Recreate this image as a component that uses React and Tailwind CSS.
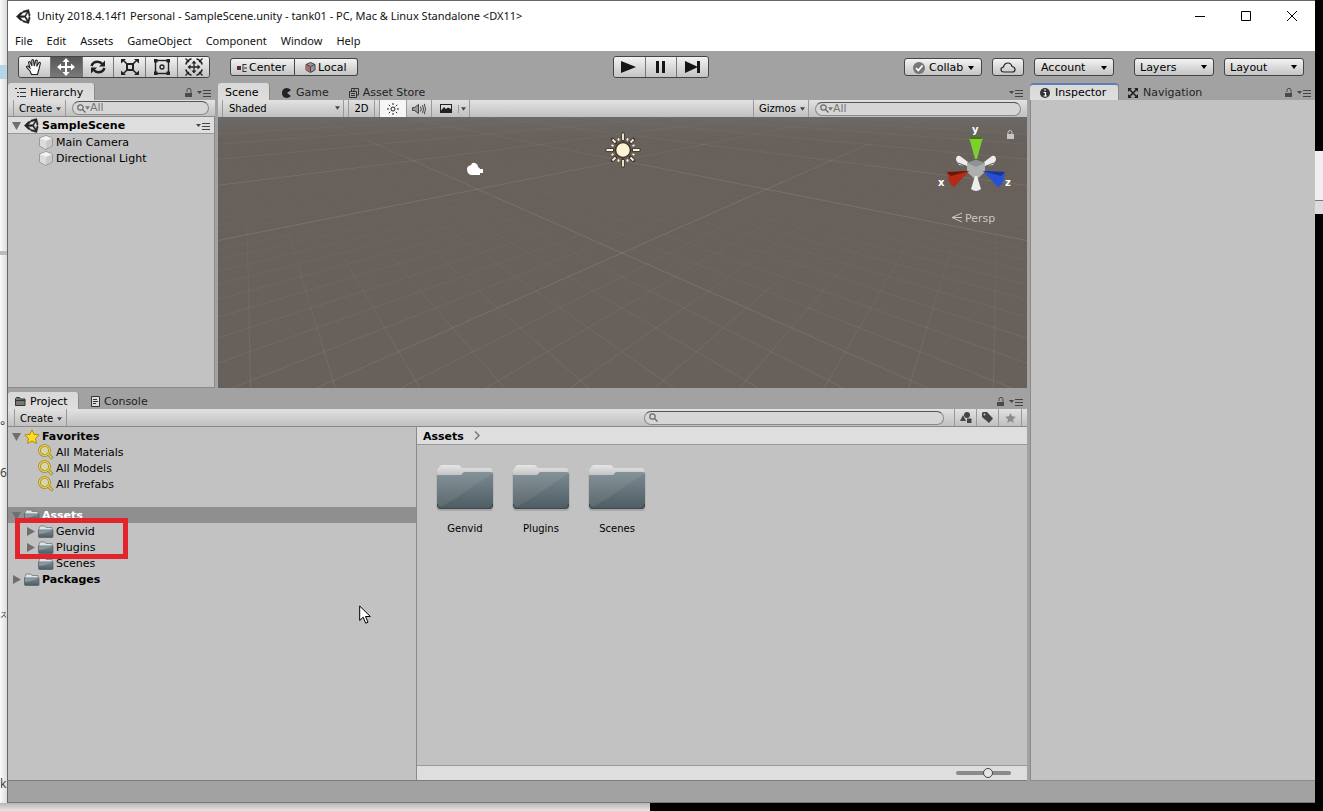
import { useState } from 'react'

const MENUS = ['File', 'Edit', 'Assets', 'GameObject', 'Component', 'Window', 'Help']

const BAR = 'bg-linear-to-b from-[#e2e2e2] to-[#c0c0c0]'
const BTN = 'bg-linear-to-b from-[#f3f3f3] to-[#c4c4c4] border-[#444] pt-px'

/* ---------- ground grid ---------- */

// ground plane seen at 45 degrees, u/v are the two grid axes in cells of 10
const HORIZON = -31
const project = (u, v) => {
  const z = 1 + 0.619 * (u + v)
  return { z, x: 404 + (234 * (v - u)) / z, y: HORIZON + 167 / z }
}

function gridLine(k, flip) {
  const near = -0.95 - k
  const far = 30
  const a = flip ? project(near, k) : project(k, near)
  const b = flip ? project(far, k) : project(k, far)
  return `M${a.x.toFixed(1)} ${a.y.toFixed(1)}L${b.x.toFixed(1)} ${b.y.toFixed(1)}`
}

const MAJOR = []
const MINOR = []
for (let i = -50; i <= 50; i++) {
  const target = i % 10 === 0 ? MAJOR : MINOR
  target.push(gridLine(i / 10, false), gridLine(i / 10, true))
}

/* ---------- small icons ---------- */

function UnityLogo({ size = 16 }) {
  return (
    <svg width={size} height={size} viewBox="0 0 24 24" fill="#222" className="shrink-0">
      <path
        d="M22.7 9.8 20.3.8 11.3 3.2 9.9 5.6H7.2L.5 12l6.7 6.5 2.7-.1 1.4 2.4 9 2.4 2.4-9L21.3 12zM11.3 5.9l6.6-1.7-3.8 6.5H6.6zm0 12.3-4.7-4.8h7.5l3.8 6.5zm7.9-.8L15.5 12l3.7-6.5 1.8 6.5z"
        stroke="#222"
        strokeWidth=".7"
      />
    </svg>
  )
}

function Caret({ className = '' }) {
  return (
    <svg width="6" height="4" viewBox="0 0 6 4" className={`shrink-0 ${className}`}>
      <path d="M0 0h6L3 4z" fill="currentColor" />
    </svg>
  )
}

function Lock({ color = '#4a4a4a' }) {
  return (
    <svg width="8" height="10" viewBox="0 0 8 10" className="shrink-0">
      <path d="M2 4V2.5a2 2 0 0 1 4-.3V5" fill="none" stroke={color} strokeWidth="1" />
      <path d="M0 5h7v4H0z" fill={color} />
    </svg>
  )
}

function PanelMenu({ lock }) {
  return (
    <div className="ml-auto flex items-center gap-1 pr-1 pt-[2px] text-[#444]">
      {lock && <Lock />}
      <button aria-label="Panel menu" className="flex items-center">
        <svg width="14" height="8" viewBox="0 0 14 8">
          <path d="M0 2h5L2.500 5z" fill="currentColor" />
          <path d="M6 1.500h8M6 4.500h8M6 7.500h8" stroke="currentColor" />
        </svg>
      </button>
    </div>
  )
}

function Fold({ open }) {
  return (
    <svg width="9" height="9" viewBox="0 0 9 9" className="shrink-0">
      <path d={open ? 'M0 1h9L4.500 9z' : 'M1 0v9L9 4.500z'} fill="#6f6f6f" />
    </svg>
  )
}

function Cube() {
  return (
    <svg width="14" height="15" viewBox="0 0 14 15" className="shrink-0">
      <path d="M7 .5 13.500 3v8L7 14.500.5 11V3z" fill="#c9c9c9" stroke="#9a9a9a" />
      <path d="M1 3.200 7 6l6-2.800L7 1z" fill="#f2f2f2" />
      <path d="M1 3.500 7 6.300V14l-6-3.200z" fill="#dcdcdc" />
    </svg>
  )
}

function MiniFolder() {
  return (
    <svg width="16" height="13" viewBox="0 0 16 13" className="shrink-0">
      <path d="M1 3.500 2 1h5l1 1.500h6v3H1z" fill="#dfe3e5" stroke="#6d7a80" strokeWidth=".8" />
      <path d="M.5 5h14.500v6.500q0 1-1 1H1.500q-1 0-1-1z" fill="url(#folderFill)" stroke="#56656c" strokeWidth=".8" />
      <path d="M1 5.300h14L5 8.500 1 9z" fill="#9fadb3" opacity=".6" />
    </svg>
  )
}

function BigFolder() {
  return (
    <svg width="60" height="50" viewBox="0 0 60 50">
      <rect x="1.500" y="8" width="57" height="40" rx="4" fill="#8d8d8d" opacity=".5" />
      <path d="M2 10V7l3-4q1-1 2-1h16q2 0 3 2l1 1h28q2 0 2.500 3v4H2z" fill="url(#paperFill)" />
      <path d="M2 12h24l3-3h27q2 0 2 2v31q0 4-4 4H6q-4 0-4-4z" fill="url(#folderFill)" />
      <path d="M2 12h24l3-3h27q2 0 2 1L18 37 2 46z" fill="#fff" opacity=".07" />
      <path d="M2.500 41q0 4.500 4 4.500h47q4 0 4-4.500" fill="none" stroke="#3c474c" strokeWidth="1.200" />
    </svg>
  )
}

function Magnifier() {
  return (
    <svg width="16" height="16" viewBox="0 0 16 16" className="shrink-0">
      <path d="m10 10 4.500 4.500" stroke="#8d7a1c" strokeWidth="3" />
      <circle cx="6.500" cy="6.500" r="5" fill="#d9d4ae" stroke="#8d7a1c" strokeWidth="2.600" />
      <circle cx="6.500" cy="6.500" r="5" fill="none" stroke="#ecd243" strokeWidth="1.400" />
      <path d="m10.500 10.500 3.700 3.700" stroke="#ecd243" strokeWidth="1.600" />
    </svg>
  )
}

function Star() {
  return (
    <svg width="16" height="15" viewBox="0 0 16 15" className="shrink-0">
      <path d="m8 .8 2.200 4.600 5 .6-3.700 3.500 1 5L8 12l-4.500 2.500 1-5L.8 6l5-.6z" fill="#ffdc1e" stroke="#b08a12" />
    </svg>
  )
}

/* ---------- toolbar icons ---------- */

const TOOLS = [
  {
    name: 'Hand',
    icon: (
      <path
        d="M6.500 16.500 5 13 1.700 9.400q-.6-1.500 1-1.300L5 10 3.500 4.500q.2-1.300 1.500-.7L7 8 6.800 2.300q.8-1.300 1.700 0L9.300 8l1.300-5.400q1-1 1.600.2L11.700 8.500l2.200-3.900q1.300-.6 1.500.6L14 11l-1 3.500-.5 2z"
        fill="#fff" stroke="#222" strokeWidth="1.100"
      />
    ),
  },
  {
    name: 'Move',
    icon: <path d="M9 0 12.500 4H10v4h4V5.500L18 9l-4 3.500V10h-4v4h2.500L9 18l-3.500-4H8v-4H4v2.500L0 9l4-3.500V8h4V4H5.500z" fill="#fff" />,
  },
  {
    name: 'Rotate',
    icon: (
      <g fill="none" stroke="#222" strokeWidth="2.400">
        <path d="M2.500 8Q4 3.800 8.500 3.800q3 0 5 2.500M15.500 10q-1.500 4.200-6 4.200-3 0-5-2.500" />
        <path d="M16 2.500v6h-6zM2 15.500v-6h6z" fill="#222" stroke="none" />
      </g>
    ),
  },
  {
    name: 'Scale',
    icon: (
      <g stroke="#222" fill="none">
        <rect x="6" y="6" width="6" height="6" strokeWidth="2" />
        <path d="m1.500 1.500 4 4M16.500 1.500l-4 4M1.500 16.500l4-4M16.500 16.500l-4-4" strokeWidth="1.600" />
        <path d="M0 1h5L0 5.500zM18 1h-5l5 4.500zM0 17h5l-5-4.500zM18 17h-5l5-4.500z" fill="#222" stroke="none" />
      </g>
    ),
  },
  {
    name: 'Rect',
    icon: (
      <g stroke="#222" fill="none">
        <rect x="2.500" y="2.500" width="13" height="13" strokeWidth="1.400" />
        <circle cx="9" cy="9" r="2" strokeWidth="1.300" />
        <path d="M1 1h3.500v3.500H1zM13.500 1H17v3.500h-3.500zM1 13.500h3.500V17H1zM13.500 13.500H17V17h-3.500z" fill="#222" stroke="none" />
      </g>
    ),
  },
  {
    name: 'Transform',
    icon: (
      <g stroke="#222" fill="none" strokeWidth="1.300">
        <path d="M6.500.8Q2.200 2.200.8 6.500M11.500.8q4.300 1.400 5.700 5.700M6.500 17.200Q2.200 15.800.8 11.500M11.500 17.200q4.300-1.400 5.700-5.700" strokeWidth="1.600" />
        <path d="M.5.5 4 4M17.500.5 14 4M.5 17.500 4 14M17.500 17.500 14 14" />
        <path d="M9 4v10M4 9h10" />
        <path d="M9 2.500 11.500 5.500h-5zM9 15.500l2.500-3h-5zM2.500 9l3-2.500v5zM15.500 9l-3-2.500v5z" fill="#222" stroke="none" />
      </g>
    ),
  },
]

const PLAYBACK = [
  { name: 'Play', icon: <path d="M1 3v12l15-6z" /> },
  { name: 'Pause', icon: <path d="M4 3h3v12H4zM10 3h3v12h-3z" /> },
  { name: 'Step', icon: <path d="M1 3v12l12-5.500V15h3V3h-3v5.500z" /> },
]

function ButtonGroup({ items, active, onPick, className }) {
  return (
    <div className={`flex h-[22px] overflow-hidden rounded-[3px] border border-[#444] ${className}`}>
      {items.map((item, i) => (
        <button
          key={item.name}
          aria-label={item.name}
          onClick={() => onPick(item.name)}
          className={`flex flex-1 items-center justify-center ${i > 0 ? 'border-l border-[#777]' : ''} ${
            active === item.name ? 'bg-linear-to-b from-[#565656] to-[#7a7a7a]' : 'bg-linear-to-b from-[#f3f3f3] to-[#c4c4c4]'
          }`}
        >
          <svg width="18" height="18" viewBox="0 0 18 18" fill="#151515">{item.icon}</svg>
        </button>
      ))}
    </div>
  )
}

function Select({ label, className }) {
  return (
    <div className={`relative h-[18px] ${className}`}>
      <select aria-label={label} className={`h-full w-full appearance-none rounded-[3px] border pl-[5px] text-[11px] ${BTN}`}>
        <option>{label}</option>
      </select>
      <Caret className="absolute right-[7px] top-[7px]" />
    </div>
  )
}

function Search({ id, placeholder, className }) {
  return (
    <div className={`flex h-[14px] items-center rounded-full border border-[#8a8a8a] border-t-[#555] bg-[#d6d6d6] pl-1 text-[#777] ${className}`}>
      <label htmlFor={id} className="flex shrink-0 items-center">
        <svg width="9" height="9" viewBox="0 0 9 9" fill="none" stroke="#666" strokeWidth="1.200">
          <circle cx="3.500" cy="3.500" r="2.700" />
          <path d="m5.500 5.500 3 3" />
        </svg>
        {placeholder && <Caret className="-ml-px w-[5px]" />}
      </label>
      <input
        id={id}
        aria-label="Search"
        placeholder={placeholder}
        className="min-w-0 flex-1 bg-transparent text-[11px] leading-3 outline-none placeholder:text-[#777]"
      />
    </div>
  )
}

function Tab({ icon, label, active, focus, className = '' }) {
  return (
    <button
      className={`flex h-[17px] items-center pt-[2px] ${
        active ? 'rounded-t-[3px] border-r border-[#8a8a8a] bg-linear-to-b from-[#d8d8d8] to-[#dedede]' : 'text-[#222]'
      } ${focus ? 'shadow-[inset_0_2px_0_#5b7fb5]' : ''} ${className}`}
    >
      {icon}
      {label}
    </button>
  )
}

/* ---------- windows ---------- */

function TitleBar() {
  return (
    <header className="bg-white font-['Noto_Sans','Noto_Sans_CJK_JP',sans-serif] text-[11px] text-[#111]">
      <div className="flex h-[30px] items-center pl-2">
        <UnityLogo size={15} />
        <h1 className="ml-[6px] font-normal">
          Unity 2018.4.14f1 Personal - SampleScene.unity - tank01 - PC, Mac &amp; Linux Standalone &lt;DX11&gt;
        </h1>
        <div className="ml-auto flex">
          <button aria-label="Minimize" className="flex w-[46px] justify-center">
            <svg width="10" height="10" viewBox="0 0 10 10" stroke="#000"><path d="M0 5.500h10" /></svg>
          </button>
          <button aria-label="Maximize" className="flex w-[46px] justify-center">
            <svg width="10" height="10" viewBox="0 0 10 10" fill="none" stroke="#000"><path d="M.5.5h9v9h-9z" /></svg>
          </button>
          <button aria-label="Close" className="flex w-[46px] justify-center">
            <svg width="10" height="10" viewBox="0 0 10 10" stroke="#000"><path d="m0 0 10 10M10 0 0 10" /></svg>
          </button>
        </div>
      </div>
      <nav className="flex h-5 items-center gap-[14px] pl-[7px]">
        {MENUS.map((m) => <button key={m}>{m}</button>)}
      </nav>
    </header>
  )
}

function Toolbar() {
  const [tool, setTool] = useState('Move')
  const [playing, setPlaying] = useState('')

  return (
    <div className="flex h-8 items-center pl-[10px] pr-[11px]">
      <div className="flex flex-1 items-center gap-5">
        <ButtonGroup items={TOOLS} active={tool} onPick={setTool} className="w-48" />
        <div className="flex h-[18px]">
          <button className={`flex w-[65px] items-center gap-[2px] rounded-l-[3px] border pl-[6px] ${BTN}`}>
            <svg width="10" height="8" viewBox="0 0 10 8" className="shrink-0">
              <path d="M0 2h4v4H0z" fill="#5d2a2a" /><path d="M6 .5h3.500M6 7.500h3.500M6 0v8M7 4h3" stroke="#333" fill="none" />
            </svg>
            Center
          </button>
          <button className={`flex w-[63px] items-center gap-[2px] rounded-r-[3px] border border-l-0 pl-[10px] ${BTN}`}>
            <svg width="11" height="11" viewBox="0 0 11 11" className="shrink-0">
              <path d="M5.500.5 10 2.500v5.500l-4.500 2.500L1 8V2.500z" fill="#999" stroke="#444" />
              <path d="M1 3 5.500 5v5L1 8z" fill="#b06a6a" /><path d="m1 2.500 4.500 2 4.500-2M5.500 5v5" stroke="#444" fill="none" />
            </svg>
            Local
          </button>
        </div>
      </div>

      <ButtonGroup items={PLAYBACK} active={playing} onPick={setPlaying} className="w-24" />

      <div className="flex flex-1 items-center justify-end">
        <button className={`flex h-[18px] w-[78px] items-center gap-1 rounded-[3px] border pl-2 ${BTN}`}>
          <svg width="12" height="12" viewBox="0 0 12 12" className="shrink-0">
            <circle cx="6" cy="6" r="6" fill="#777" />
            <path d="m3 6 2.300 2.500L9.500 3.500" fill="none" stroke="#fff" strokeWidth="1.800" />
          </svg>
          Collab
          <Caret className="ml-px" />
        </button>
        <button aria-label="Services" className={`ml-[10px] flex h-[18px] w-8 items-center justify-center rounded-[3px] border ${BTN}`}>
          <svg width="16" height="11" viewBox="0 0 16 11" fill="none" stroke="#222" strokeWidth="1.200">
            <path d="M4 10q-3 0-3-2.500Q1 5.500 3.500 5 4.500 1 8 1q3 0 4 3.500 3 .5 3 3Q15 10 12.500 10z" />
          </svg>
        </button>
        <button className={`ml-[10px] flex h-[18px] w-20 items-center justify-between rounded-[3px] border pl-[6px] pr-[6px] ${BTN}`}>
          Account
          <Caret />
        </button>
        <Select label="Layers" className="ml-5 w-20" />
        <Select label="Layout" className="ml-[10px] w-20" />
      </div>
    </div>
  )
}

function Hierarchy() {
  return (
    <section className="flex w-[207px] shrink-0 flex-col">
      <div className="flex">
        <Tab
          active
          label="Hierarchy"
          className="w-[87px] gap-1 pl-[7px]"
          icon={
            <svg width="11" height="9" viewBox="0 0 11 9" stroke="#333">
              <path d="M0 .5h2M4 .5h7M2 4.500h2M5 4.500h6M2 8.500h2M5 8.500h6" />
            </svg>
          }
        />
        <PanelMenu lock />
      </div>
      <div className={`flex h-[17px] items-center border-b border-[#8a8a8a] text-[10px] ${BAR}`}>
        <button className="ml-[5px] flex h-full w-[53px] shrink-0 items-center gap-1 border-x border-[#999] pl-[5px] pt-[2px]">
          Create <Caret className="w-[5px] text-[#444]" />
        </button>
        <Search id="hierarchy-search" placeholder="All" className="ml-[6px] mr-[6px] min-w-0 flex-1" />
      </div>
      <div className="flex-1 border-b border-r border-[#8a8a8a] bg-[#c2c2c2]">
        <div className="flex h-[17px] items-center border-b border-[#999] bg-[#dedede] pl-1">
          <Fold open />
          <span className="ml-[3px] flex"><UnityLogo size={15} /></span>
          <span className="ml-[3px] pt-[2px] font-bold">SampleScene</span>
          <PanelMenu />
        </div>
        {['Main Camera', 'Directional Light'].map((name) => (
          <div key={name} className="flex h-4 items-center gap-[3px] pl-[31px]">
            <Cube />
            <span className="pt-[2px]">{name}</span>
          </div>
        ))}
      </div>
    </section>
  )
}

function SceneCanvas() {
  return (
    <svg className="min-h-0 w-full flex-1 bg-[#67605b]" viewBox="0 0 809 271" preserveAspectRatio="xMidYMid slice">
      <defs>
        <linearGradient id="fade" x1="0" y1="0" x2="0" y2="1">
          <stop offset="0" stopColor="#fff" stopOpacity="0" />
          <stop offset=".35" stopColor="#fff" stopOpacity=".25" />
          <stop offset="1" stopColor="#fff" />
        </linearGradient>
        <linearGradient id="majorFade" x1="0" y1="0" x2="0" y2="1">
          <stop offset="0" stopColor="#fff" stopOpacity=".2" />
          <stop offset=".3" stopColor="#fff" />
          <stop offset=".6" stopColor="#fff" />
          <stop offset="1" stopColor="#fff" stopOpacity=".7" />
        </linearGradient>
        <linearGradient id="haze" x1="0" y1="0" x2="0" y2="1">
          <stop offset="0" stopColor="#6c6a69" />
          <stop offset=".12" stopColor="#67605b" stopOpacity="0" />
        </linearGradient>
        <mask id="near"><rect width="809" height="271" fill="url(#fade)" /></mask>
        <mask id="nearMajor"><rect width="809" height="271" fill="url(#majorFade)" /></mask>
      </defs>
      <rect width="809" height="271" fill="url(#haze)" />
      <g mask="url(#near)">
        <path d={MINOR.join('')} stroke="#aaa6a2" strokeOpacity=".2" fill="none" />
      </g>
      <g mask="url(#nearMajor)">
        <path d={MAJOR.join('')} stroke="#b5b0ac" strokeOpacity=".22" fill="none" />
      </g>

      {/* camera gizmo */}
      <path d="M249 52q0-3 4-4 1-3 4-2 3 1 3 4 2 1 2 2h3v4h-3v2h-9q-4-1-4-6z" fill="#fff" />

      {/* light gizmo */}
      <g transform="translate(405 33)" stroke="#40392e" strokeWidth="3.600" strokeLinecap="round">
        <circle r="7.500" fill="#fff3d6" strokeWidth="1.600" />
        <path d="M0-10v-6M0 10v6M-10 0h-6M10 0h6M7.500-7.500l3-3M-7.500-7.500l-3-3M7.500 7.500l3 3M-7.500 7.500l-3 3" />
        <path
          d="M0-10v-6.500M0 10v6.500M-10 0h-6.500M10 0h6.500M7.500-7.500l3-3M-7.500-7.500l-3-3M7.500 7.500l3 3M-7.500 7.500l-3 3M4-9.500l1-2M-4-9.500l-1-2M4 9.500l1 2M-4 9.500l-1 2M9.500-4l2-1M-9.500-4l-2-1M9.500 4l2 1M-9.500 4l-2 1"
          stroke="#fff3d6" strokeWidth="1.800" strokeLinecap="butt"
        />
      </g>

      {/* orientation gizmo */}
      <path d="M738 43q0-5 4-4l8 6-1 4-8-1zM778 43q0-5-4-4l-8 6 1 4 8-1z" fill="#ececec" />
      <path d="M740 46l8 3M776 46l-8 3" stroke="#555" />
      <path d="m749 46 9-3 9 3v9l-9 8-9-8z" fill="#aeb0b0" />
      <path d="m749 46 9-3 9 3-9 4z" fill="#8d9293" />
      <path d="M751 20h14l-6 22h-2z" fill="#7dd02c" /><path d="M751 20h14l-1 2h-12z" fill="#3f7b13" />
      <path d="m729 55 22-1-15 16q-5-1-7-15z" fill="#b52a14" /><path d="m729 55 22-1-18 5z" fill="#6d1509" />
      <path d="m787 55-22-1 15 16q5-1 7-15z" fill="#2450d8" /><path d="m787 55-22-1 18 5z" fill="#17348f" />
      <path d="M757 59h2l4 13q-5 4-10 0z" fill="#ededed" />
      <g fill="#fff" className="font-['DejaVu_Sans',sans-serif] text-[10px] font-bold">
        <text x="754" y="16">y</text>
        <text x="720" y="69">x</text>
        <text x="787" y="69">z</text>
      </g>
      <path d="M790 17v-1.500a2 2 0 0 1 4 0V18" fill="none" stroke="#c8c6c4" /><path d="M789 17h7v5h-7z" fill="#c8c6c4" />
      <g fill="none" stroke="#c8c6c4"><path d="m744 96-10 4.500 10 4.500M734 100.500h10" /></g>
      <text x="747" y="105" fill="#c8c6c4" className="font-['DejaVu_Sans',sans-serif] text-[11px]">Persp</text>
    </svg>
  )
}

function Scene() {
  return (
    <section className="flex min-w-0 flex-1 flex-col">
      <div className="flex">
        <Tab active label="Scene" className="w-[52px] pl-[7px]" />
        <Tab
          label="Game"
          className="ml-3 gap-[5px]"
          icon={<svg width="9" height="10" viewBox="0 0 9 10"><path d="M9 2Q7 0 4.500 0 0 .5 0 5t4.500 5Q7 10 9 8L5 5z" fill="#222" /></svg>}
        />
        <Tab
          label="Asset Store"
          className="ml-5 gap-1"
          icon={
            <svg width="10" height="10" viewBox="0 0 10 10" fill="none" stroke="#333">
              <path d="M.5 3.500h7v6h-7zM2.500 3V.5h7V7H8M2 5.500h4M2 7.500h4M5 .5v3" />
            </svg>
          }
        />
        <PanelMenu />
      </div>
      <div className={`flex h-[17px] shrink-0 items-center text-[10px] ${BAR}`}>
        <div className="relative ml-1 h-full w-[122px] border-x border-[#999]">
          <select aria-label="Draw mode" className="h-full w-full appearance-none pl-[6px] pt-px">
            <option>Shaded</option>
          </select>
          <Caret className="absolute right-[3px] top-[6px] w-[5px] text-[#444]" />
        </div>
        <button className="ml-1 h-full w-[27px] border-x border-[#999] pt-px">2D</button>
        <button aria-label="Lighting" className="ml-1 flex h-full w-[27px] items-center justify-center border-l border-[#999] bg-[#f6f6f6]">
          <svg width="12" height="12" viewBox="0 0 12 12" fill="none" stroke="#222">
            <circle cx="6" cy="6" r="2" />
            <path d="M6 0v2M6 10v2M0 6h2M10 6h2M1.800 1.800 3.200 3.200M8.800 8.800l1.400 1.400M10.200 1.800 8.800 3.200M3.200 8.800l-1.400 1.400" />
          </svg>
        </button>
        <button aria-label="Audio" className="flex h-full w-[26px] items-center justify-center border-x border-[#999]">
          <svg width="14" height="12" viewBox="0 0 14 12" fill="none" stroke="#444">
            <path d="M.5 4.500h2l4-3v9l-4-3h-2z" fill="#999" />
            <path d="M8.500 3.500q1.500 2.500 0 5M10.500 2q2 4 0 8M12.300.8q2.400 5.200 0 10.400" />
          </svg>
        </button>
        <button aria-label="Effects" className="flex h-full w-[38px] items-center border-r border-[#999] pl-2">
          <svg width="12" height="9" viewBox="0 0 12 9">
            <path d="M0 0h12v9H0z" fill="#222" /><path d="M1 6.500 4 3l2 2 2-1.500 3 1.500V1H1z" fill="#ddd" />
          </svg>
          <span className="ml-[6px] mr-[2px] h-2 border-l border-[#999]" />
          <Caret className="w-[5px] text-[#444]" />
        </button>
        <button className="ml-auto flex h-full w-[56px] items-center gap-1 border-x border-[#999] pl-[5px] pt-px">
          Gizmos <Caret className="w-[5px] text-[#444]" />
        </button>
        <Search id="scene-search" placeholder="All" className="ml-[6px] mr-[6px] w-[206px]" />
      </div>
      <SceneCanvas />
    </section>
  )
}

function Row({ depth = 0, fold, icon, label, bold, selected }) {
  return (
    <div className={`flex h-4 items-center pl-1 ${selected ? 'bg-[#8f8f8f] text-white' : ''} ${bold ? 'font-bold' : ''}`}>
      <span className={`flex w-3 shrink-0 ${depth ? 'ml-[14px]' : ''}`}>{fold && <Fold open={fold === 'open'} />}</span>
      <span className="mr-[2px] flex w-4">{icon}</span>
      <span className="pt-[2px]">{label}</span>
    </div>
  )
}

function ProjectTree() {
  return (
    <div className="relative w-[409px] shrink-0 border-r border-[#8a8a8a] bg-[#c2c2c2] pt-px">
      <Row fold="open" icon={<Star />} label="Favorites" bold />
      <Row depth={1} icon={<Magnifier />} label="All Materials" />
      <Row depth={1} icon={<Magnifier />} label="All Models" />
      <Row depth={1} icon={<Magnifier />} label="All Prefabs" />
      <div className="mt-[15px]">
        <Row fold="open" icon={<MiniFolder />} label="Assets" bold selected />
        <Row depth={1} fold="closed" icon={<MiniFolder />} label="Genvid" />
        <Row depth={1} fold="closed" icon={<MiniFolder />} label="Plugins" />
        <Row depth={1} icon={<MiniFolder />} label="Scenes" />
        <Row fold="closed" icon={<MiniFolder />} label="Packages" bold />
      </div>

      {/* highlight over the imported folders */}
      <div className="absolute left-[7px] top-[91px] h-[41px] w-[113px] border-[5px] border-[#e2242c]" />

      {/* mouse pointer */}
      <svg width="13" height="20" viewBox="0 0 13 20" className="absolute left-[351px] top-[178px]">
        <path d="M.7 1v14.500l3.500-3.300 2.500 6 2.300-1-2.500-5.700h4.800z" fill="#fff" stroke="#000" />
      </svg>
    </div>
  )
}

function Project() {
  const [size, setSize] = useState(60)

  return (
    <section className="flex min-h-0 flex-1 flex-col pt-1">
      <div className="flex">
        <Tab
          active
          label="Project"
          className="w-[71px] gap-1 pl-[7px]"
          icon={<svg width="11" height="9" viewBox="0 0 11 9"><path d="M.5 8.500v-7l1-1h3l1 1.500h4.500v6.500z" fill="#777" stroke="#333" /><path d="M1 3.500h9" stroke="#333" /></svg>}
        />
        <Tab
          label="Console"
          className="ml-3 gap-1"
          icon={<svg width="9" height="11" viewBox="0 0 9 11" fill="#ddd" stroke="#333"><path d="M.5.5h8v10h-8zM2 3.500h4M2 5.500h5M2 7.500h3" /></svg>}
        />
        <PanelMenu lock />
      </div>
      <div className={`flex h-[18px] shrink-0 items-center border-b border-[#8a8a8a] text-[10px] ${BAR}`}>
        <button className="ml-[6px] flex h-full w-[53px] items-center gap-1 border-x border-[#999] pl-[5px] pt-[2px]">
          Create <Caret className="w-[5px] text-[#444]" />
        </button>
        <Search id="project-search" className="ml-auto w-[300px]" />
        <div className="ml-[10px] mr-[5px] flex h-full divide-x divide-[#999] border-x border-[#999]">
          <button aria-label="Search by type" className="flex w-[22px] items-center justify-center">
            <svg width="12" height="11" viewBox="0 0 12 11" fill="#444"><circle cx="7" cy="3" r="3" /><path d="M3 3 0 9h6zM7 6.500h4.500V11H7z" /></svg>
          </button>
          <button aria-label="Search by label" className="flex w-[22px] items-center justify-center">
            <svg width="11" height="11" viewBox="0 0 11 11"><path d="M0 1 1 0h4l6 6.500L7 11 0 5z" fill="#444" /><circle cx="2.500" cy="2.500" r="1" fill="#ccc" /></svg>
          </button>
          <button aria-label="Save search" className="flex w-[22px] items-center justify-center">
            <svg width="11" height="10" viewBox="0 0 16 15"><path d="m8 0 2.300 5 5.700.6-4.200 4 1 5.400L8 12l-4.800 3 1-5.400L0 5.600 5.700 5z" fill="#8c8c8c" /></svg>
          </button>
        </div>
      </div>
      <div className="flex min-h-0 flex-1 border-b border-[#7c7c7c]">
        <ProjectTree />
        <div className="flex min-w-0 flex-1 flex-col bg-[#c2c2c2]">
          <div className="flex h-[18px] items-center border-b border-[#999] bg-[#dedede] pl-[6px] font-bold">
            <span className="pt-[2px]">Assets</span>
            <svg width="6" height="9" viewBox="0 0 6 9" className="ml-[10px]"><path d="m1 .5 4 4-4 4" fill="none" stroke="#777" strokeWidth="1.500" /></svg>
          </div>
          <div className="flex flex-1 gap-4 pl-[18px] pt-[18px]">
            {['Genvid', 'Plugins', 'Scenes'].map((name) => (
              <div key={name} className="flex w-[60px] flex-col items-center gap-2 text-[10px]">
                <BigFolder />
                {name}
              </div>
            ))}
          </div>
          <div className="flex h-[15px] items-center justify-end border-t border-[#999] bg-[#dedede] pr-4">
            <input
              type="range"
              aria-label="Icon size"
              value={size}
              onChange={(e) => setSize(e.target.value)}
              className="h-1 w-[55px] appearance-none rounded-full bg-[#8a8a8a] [&::-webkit-slider-thumb]:h-[10px] [&::-webkit-slider-thumb]:w-[10px] [&::-webkit-slider-thumb]:appearance-none [&::-webkit-slider-thumb]:rounded-full [&::-webkit-slider-thumb]:border [&::-webkit-slider-thumb]:border-[#444] [&::-webkit-slider-thumb]:bg-[#e6e6e6]"
            />
          </div>
        </div>
      </div>
    </section>
  )
}

function Inspector() {
  return (
    <section className="flex w-[285px] shrink-0 flex-col">
      <div className="flex">
        <Tab
          active
          focus
          label="Inspector"
          className="w-[89px] gap-[5px] pl-[10px]"
          icon={
            <svg width="10" height="10" viewBox="0 0 10 10">
              <circle cx="5" cy="5" r="5" fill="#333" /><path d="M4 2h2M3.500 4.500H5.500v3M3.500 8h3.500" stroke="#fff" strokeWidth="1.200" fill="none" />
            </svg>
          }
        />
        <Tab
          label="Navigation"
          className="ml-[9px] gap-[5px]"
          icon={
            <svg width="10" height="10" viewBox="0 0 10 10" fill="#222">
              <path d="M0 0h4L0 4zM10 0v4L6 0zM0 10V6l4 4zM10 10H6l4-4z" /><path d="m1 1 8 8M9 1 1 9" stroke="#222" strokeWidth="1.600" />
            </svg>
          }
        />
        <PanelMenu lock />
      </div>
      <div className="flex-1 border-b border-l border-[#8a8a8a] bg-[#c2c2c2]" />
    </section>
  )
}

export default function App() {
  return (
    <div className="flex h-screen flex-col overflow-hidden bg-black font-['DejaVu_Sans','Noto_Sans_CJK_JP',sans-serif] text-[11px] leading-4 text-black">
      {/* shared gradients */}
      <svg width="0" height="0" className="absolute">
        <linearGradient id="folderFill" x1="0" y1="0" x2="0" y2="1">
          <stop offset="0" stopColor="#7b8b92" />
          <stop offset="1" stopColor="#4e5c62" />
        </linearGradient>
        <linearGradient id="paperFill" x1="0" y1="0" x2="0" y2="1">
          <stop offset="0" stopColor="#e6e6e6" />
          <stop offset="1" stopColor="#c4c4c4" />
        </linearGradient>
      </svg>

      <div className="flex min-h-0 flex-1">
        {/* window behind, left edge */}
        <div className="flex w-2 shrink-0 flex-col overflow-hidden border-r border-[#666] bg-linear-to-r from-[#fafafa] to-[#dcdcdc] font-['Noto_Sans','Noto_Sans_CJK_JP',sans-serif] text-[12px] text-[#444]">
          <div className="mt-[65px] h-[14px] bg-[#b9d3e6]" />
          <div className="mt-[172px] h-1 bg-[#bbb]" />
          <span className="mt-[163px]">°</span>
          <span className="mt-[31px]">6</span>
          <span className="mt-[126px] text-[7px]">ス</span>
          <span className="mt-[153px]">ks</span>
        </div>

        <div className="flex min-w-0 flex-1 flex-col border-t border-[#666] bg-[#a2a2a2]">
          <TitleBar />
          <Toolbar />
          <div className="flex min-h-0 flex-1 gap-[3px]">
            <div className="flex min-w-0 flex-1 flex-col">
              <div className="flex h-[305px] shrink-0 gap-[3px]">
                <Hierarchy />
                <Scene />
              </div>
              <Project />
            </div>
            <Inspector />
          </div>
          <footer className="h-[22px] shrink-0 border-b border-[#777]" />
        </div>

        {/* window behind, right edge */}
        <div className="w-2 shrink-0 pt-[151px]">
          <div className="h-[50px] border-b border-[#777] bg-[#efefef]" />
          <div className="h-[13px] bg-[#dcdcdc]" />
        </div>
      </div>
      <div className="h-2 w-[650px] shrink-0 bg-linear-to-b from-[#b5b5b5] to-[#e8e8e8]" />
    </div>
  )
}
